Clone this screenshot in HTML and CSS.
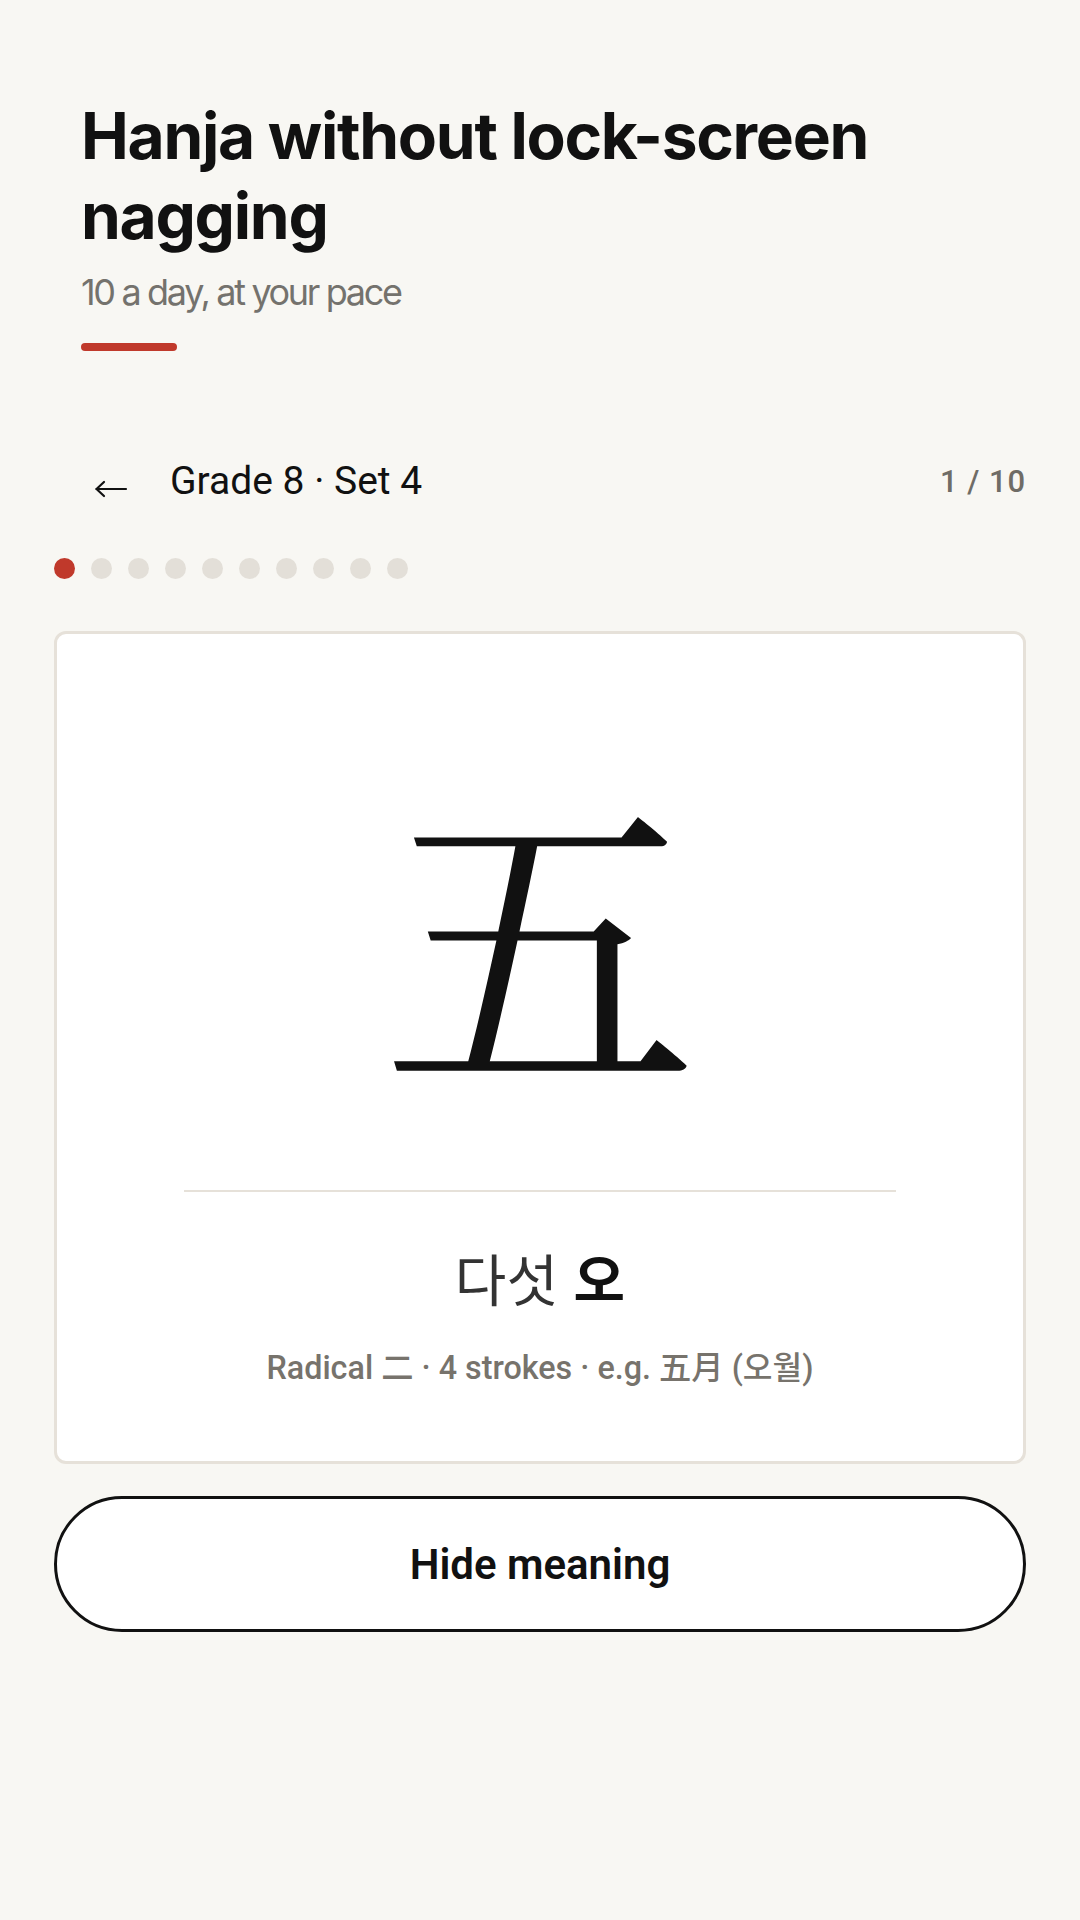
FILE: index.html
```html
<!DOCTYPE html>
<html lang="en">
<head>
<meta charset="utf-8">
<title>Hanja</title>
<link rel="stylesheet" href="styles.css">
</head>
<body>
<div class="page">
  <header class="hero">
    <h1 class="hero-title">Hanja without lock-screen nagging</h1>
    <p class="hero-sub">10 a day, at your pace</p>
    <div class="hero-bar"></div>
  </header>

  <main class="study">
    <div class="nav">
      <div class="nav-left">
        <span class="nav-back" aria-label="Back">
          <svg class="nav-back-icon" width="34" height="20" viewBox="0 0 34 20" fill="none" stroke="#111" stroke-width="2.2" stroke-linecap="round" stroke-linejoin="round">
            <path d="M32 10 H2.5"/>
            <path d="M10 3 L2.5 10 L10 17"/>
          </svg>
        </span>
        <span class="nav-title">Grade 8 · Set 4</span>
      </div>
      <span class="nav-count">1 / 10</span>
    </div>

    <div class="dots">
      <span class="dot dot-active"></span>
      <span class="dot"></span>
      <span class="dot"></span>
      <span class="dot"></span>
      <span class="dot"></span>
      <span class="dot"></span>
      <span class="dot"></span>
      <span class="dot"></span>
      <span class="dot"></span>
      <span class="dot"></span>
    </div>

    <section class="card">
      <div class="card-glyph" lang="zh">五</div>
      <div class="card-divider"></div>
      <div class="card-reading" lang="ko"><span class="reading-meaning">다섯</span> <span class="reading-sound">오</span></div>
      <div class="card-meta">Radical <span lang="zh">二</span> · 4 strokes · e.g. <span lang="zh">五月</span> <span lang="ko">(오월)</span></div>
    </section>

    <button class="toggle">Hide meaning</button>
  </main>
</div>
</body>
</html>
```

FILE: styles.css
```css
* { box-sizing: border-box; }

html, body {
  margin: 0;
  padding: 0;
  background: #f8f7f3;
}

body {
  width: 1080px;
  min-height: 1920px;
  font-family: Roboto, "Noto Sans CJK KR", sans-serif;
  color: #111;
}

.hero {
  padding: 96px 81px 0 81px;
}

.hero-title {
  margin: 0;
  font-family: Inter, "Noto Sans", sans-serif;
  font-weight: 700;
  font-size: 64px;
  line-height: 80px;
  letter-spacing: -0.02em;
  color: #111;
}

.hero-sub {
  margin: 14px 0 0 0;
  font-family: Inter, "Noto Sans", sans-serif;
  font-weight: 400;
  font-size: 36px;
  line-height: 44px;
  letter-spacing: -0.065em;
  color: #74726d;
}

.hero-bar {
  margin-top: 29px;
  width: 96px;
  height: 8px;
  border-radius: 4px;
  background: #c0392b;
}

.study {
  padding: 0 54px;
}

.nav {
  margin-top: 100px;
  display: flex;
  align-items: center;
  justify-content: space-between;
  height: 60px;
}

.nav-left {
  display: flex;
  align-items: center;
}

.nav-back {
  display: flex;
  align-items: center;
  width: 116px;
  height: 60px;
  padding-left: 40px;
  padding-top: 16px;
}

.nav-back-icon {
  display: block;
}

.nav-title {
  font-size: 39px;
  font-weight: 400;
  color: #111;
}

.nav-count {
  font-size: 31px;
  font-weight: 500;
  color: #6f6c66;
  letter-spacing: 0.03em;
}

.dots {
  margin-top: 47px;
  display: flex;
  gap: 16px;
}

.dot {
  width: 21px;
  height: 21px;
  border-radius: 50%;
  background: #e3dfd8;
}

.dot-active {
  background: #c0392b;
}

.card {
  margin-top: 52px;
  height: 833px;
  background: #fff;
  border: 3px solid #e6e1d9;
  border-radius: 12px;
  display: flex;
  flex-direction: column;
  align-items: center;
}

.card-glyph {
  margin-top: 125px;
  font-family: "Noto Serif CJK SC", "Noto Serif CJK KR", "Noto Serif CJK JP", "Noto Sans CJK SC", serif;
  font-size: 316px;
  line-height: 340px;
  color: #111;
}

.card-divider {
  margin-top: 91px;
  width: 712px;
  height: 2px;
  background: #e6e1d9;
}

.card-reading {
  margin-top: 50px;
  font-family: "Noto Sans CJK KR", sans-serif;
  font-size: 56px;
  line-height: 70px;
}

.reading-meaning {
  font-weight: 400;
  color: #333;
}

.reading-sound {
  font-weight: 700;
  color: #111;
}

.card-meta {
  margin-top: 30px;
  font-family: Roboto, "Noto Sans CJK KR", sans-serif;
  font-size: 32.3px;
  font-weight: 500;
  color: #77736c;
}

.toggle {
  display: block;
  margin-top: 32px;
  width: 100%;
  height: 136px;
  background: #fff;
  border: 3px solid #111;
  border-radius: 68px;
  font-family: Roboto, sans-serif;
  font-size: 42px;
  font-weight: 600;
  color: #111;
}
```
